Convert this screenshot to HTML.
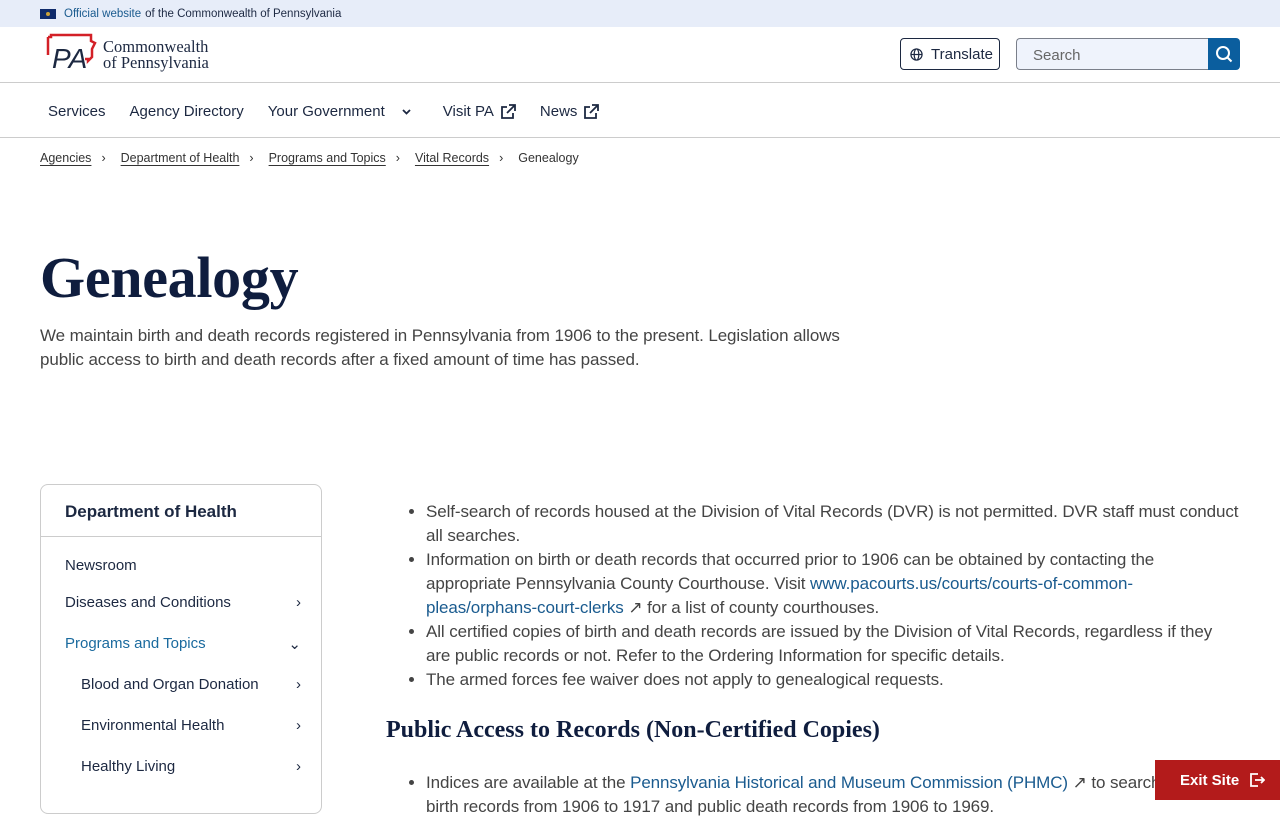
<!DOCTYPE html>
<html><head><meta charset="utf-8"><style>
*{box-sizing:border-box;margin:0;padding:0}
body{width:1280px;height:800px;overflow:hidden;font-family:"Liberation Sans",sans-serif;color:#333;background:#fff;position:relative}
a{color:#1a5b8f}
.top{height:27px;background:#e7edf9;font-size:11.5px;color:#1e2a44;display:flex;align-items:center;padding-left:40px}
.flag{width:16px;height:10px;background:#0f2b6b;margin-right:8px;position:relative}
.flag:after{content:"";position:absolute;left:6px;top:3px;width:4px;height:4px;background:#c9a23a;border-radius:50%}
.top a{margin-right:4px;color:#1a5b8f}
.hdr{height:56px;border-bottom:1px solid #ccc;position:relative}
.logo{position:absolute;left:44px;top:6px}
.logotext{position:absolute;left:103px;top:12px;font-family:"Liberation Serif",serif;font-size:16.5px;line-height:16px;color:#1c2841}
.tr{position:absolute;left:900px;top:11px;width:100px;height:32px;border:1px solid #1c2841;border-radius:4px;font-size:15px;color:#1c2841;display:flex;align-items:center;padding-left:9px;gap:8px}
.search{position:absolute;left:1016px;top:11px;width:193px;height:32px;border:1px solid #7a7f8a;border-right:none;border-radius:4px 0 0 4px;background:#eff3fc;font-size:15px;color:#666;padding:8px 16px}
.sbtn{position:absolute;left:1208px;top:11px;width:32px;height:32px;background:#0b5e9e;border-radius:0 4px 4px 0;display:flex;align-items:center;justify-content:center}
.nav{height:55px;border-bottom:1px solid #ccc;display:flex;align-items:center;padding-left:48px;font-size:15px;color:#1c2841;padding-top:3px}
.nav span{margin-right:24px;display:flex;align-items:center;gap:6px}
.bc{padding:13px 0 0 40px;font-size:12.5px;color:#333;display:flex;gap:0}
.bc a{color:#333;text-decoration:underline;text-underline-offset:3px}
.bc i{font-style:normal;margin:0 15px 0 10px}
h1{position:absolute;left:40px;top:244px;font-family:"Liberation Serif",serif;font-size:58px;font-weight:bold;color:#0f1d3e;letter-spacing:-.3px}
.lead{position:absolute;left:40px;top:324px;width:820px;font-size:17px;line-height:24px;color:#444;letter-spacing:-.1px}
.side{position:absolute;left:40px;top:484px;width:282px;height:330px;border:1px solid #ccc;border-radius:8px;font-size:15px;color:#1c2841}
.side .h{height:52px;border-bottom:1px solid #ccc;font-weight:bold;font-size:17px;padding:17px 0 0 24px}
.side .it{position:absolute;left:24px;width:236px;display:flex;justify-content:space-between}
.main{position:absolute;left:386px;top:500px;width:880px;font-size:17px;line-height:24px;color:#444;letter-spacing:-.1px;white-space:nowrap}
.main ul{padding-left:40px}
h2{font-family:"Liberation Serif",serif;font-weight:bold;font-size:24px;color:#0f1d3e;margin:26px 0 29px;letter-spacing:0}
.exit{position:absolute;left:1155px;top:760px;width:125px;height:40px;background:#b31b1b;color:#fff;font-weight:bold;font-size:15px;display:flex;align-items:center;padding-left:25px;gap:10px}
</style></head><body>
<div class="top"><div class="flag"></div><a>Official website</a> of the Commonwealth of Pennsylvania</div>
<div class="hdr">
<svg class="logo" width="54" height="40" viewBox="0 0 54 40"><path d="M4 4h3v-2h40v6l4 2-3 6v8l-4 4v-2h-3" fill="none" stroke="#d32027" stroke-width="2.5"/><path d="M4 4v18" stroke="#d32027" stroke-width="2.5"/><text x="8" y="35" font-family="Liberation Sans" font-style="italic" font-size="28" fill="#1c2841">PA</text></svg>
<div class="logotext">Commonwealth<br>of Pennsylvania</div>
<div class="tr"><svg width="13" height="13" viewBox="0 0 14 14" fill="none" stroke="#1c2841" stroke-width="1.3"><circle cx="7" cy="7" r="6"/><ellipse cx="7" cy="7" rx="2.5" ry="6"/><path d="M1 7h12"/></svg>Translate</div>
<div class="search">Search</div>
<div class="sbtn"><svg width="18" height="18" viewBox="0 0 18 18" fill="none" stroke="#fff" stroke-width="2"><circle cx="8" cy="8" r="6"/><path d="M12.5 12.5l4 4"/></svg></div>
</div>
<div class="nav"><span>Services</span><span>Agency Directory</span><span style="margin-right:30px">Your Government <svg width="22" height="10" viewBox="0 0 22 10"><path d="M12 3l3.5 3.5L19 3" fill="none" stroke="#1c2841" stroke-width="1.8"/></svg></span><span>Visit PA <svg width="16" height="16" viewBox="0 0 16 16" fill="none" stroke="#1c2841" stroke-width="1.8"><path d="M7 3H2v11h11V9M9 1h6v6M15 1L7 9"/></svg></span><span>News <svg width="16" height="16" viewBox="0 0 16 16" fill="none" stroke="#1c2841" stroke-width="1.8"><path d="M7 3H2v11h11V9M9 1h6v6M15 1L7 9"/></svg></span></div>
<div class="bc"><a>Agencies</a><i>›</i><a>Department of Health</a><i>›</i><a>Programs and Topics</a><i>›</i><a>Vital Records</a><i>›</i><span>Genealogy</span></div>
<h1>Genealogy</h1>
<div class="lead">We maintain birth and death records registered in Pennsylvania from 1906 to the present. Legislation allows<br>public access to birth and death records after a fixed amount of time has passed.</div>
<div class="side"><div class="h">Department of Health</div>
<div class="it" style="top:72px">Newsroom</div>
<div class="it" style="top:109px">Diseases and Conditions<span>›</span></div>
<div class="it" style="top:150px;color:#1a6a9e">Programs and Topics<span style="color:#1c2841">⌄</span></div>
<div class="it" style="top:191px;left:40px;width:220px">Blood and Organ Donation<span>›</span></div>
<div class="it" style="top:232px;left:40px;width:220px">Environmental Health<span>›</span></div>
<div class="it" style="top:273px;left:40px;width:220px">Healthy Living<span>›</span></div>
</div>
<div class="main"><ul>
<li>Self-search of records housed at the Division of Vital Records (DVR) is not permitted. DVR staff must conduct<br>all searches.</li>
<li>Information on birth or death records that occurred prior to 1906 can be obtained by contacting the<br>appropriate Pennsylvania County Courthouse. Visit <a>www.pacourts.us/courts/courts-of-common-</a><br><a>pleas/orphans-court-clerks</a> ↗ for a list of county courthouses.</li>
<li>All certified copies of birth and death records are issued by the Division of Vital Records, regardless if they<br>are public records or not. Refer to the Ordering Information for specific details.</li>
<li>The armed forces fee waiver does not apply to genealogical requests.</li></ul>
<h2>Public Access to Records (Non-Certified Copies)</h2>
<ul><li>Indices are available at the <a>Pennsylvania Historical and Museum Commission (PHMC)</a> ↗ to search for<br>birth records from 1906 to 1917 and public death records from 1906 to 1969.</li></ul>
</div>
<div class="exit">Exit Site <svg width="16" height="16" viewBox="0 0 16 16" fill="none" stroke="#fff" stroke-width="1.8"><path d="M9 2H2v12h7M6 8h9M12 5l3 3-3 3"/></svg></div>
</body></html>
